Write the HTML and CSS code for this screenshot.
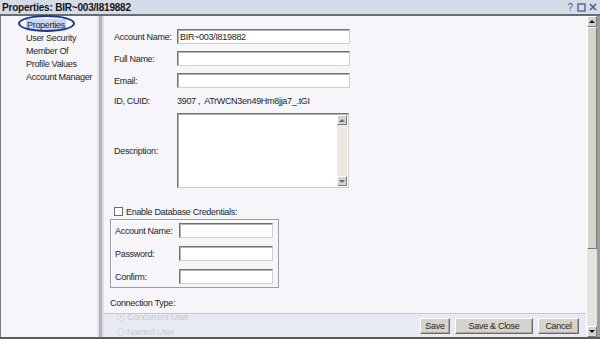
FILE: index.html
```html
<!DOCTYPE html>
<html>
<head>
<meta charset="utf-8">
<link rel="stylesheet" href="styles.css">
</head>
<body>
<div class="window">
  <div class="titlebar">
    <span class="title">Properties: BIR~003/I819882</span>
    <span class="tools">
      <span class="help">?</span>
      <svg class="ico" width="9" height="9" viewBox="0 0 9 9"><rect x="1" y="1" width="7" height="7" fill="none" stroke="#4a5c88" stroke-width="1.3"/></svg>
      <svg class="ico" width="8" height="8" viewBox="0 0 8 8"><path d="M1 1 L7 7 M7 1 L1 7" stroke="#4a5c88" stroke-width="1.5"/></svg>
    </span>
  </div>
  <div class="main">
    <nav class="sidebar">
      <div class="nav-item active"><span>Properties</span></div>
      <div class="nav-item">User Security</div>
      <div class="nav-item">Member Of</div>
      <div class="nav-item">Profile Values</div>
      <div class="nav-item">Account Manager</div>
    </nav>
    <div class="splitter"></div>
    <div class="content">
      <div class="form">
        <div class="grid">
          <label class="lbl">Account Name:</label>
          <input class="field" type="text" value="BIR~003/I819882">
          <label class="lbl">Full Name:</label>
          <input class="field" type="text" value="">
          <label class="lbl">Email:</label>
          <input class="field" type="text" value="">
          <span class="lbl">ID, CUID:</span>
          <span class="idval">3907 ,  ATrWCN3en49Hm8jja7_.tGI</span>
          <label class="lbl">Description:</label>
          <div class="textarea">
            <div class="ta-body"></div>
            <div class="ta-scroll">
              <div class="mini-btn"><span class="tri-up"></span></div>
              <div class="ta-track"></div>
              <div class="mini-btn"><span class="tri-down"></span></div>
            </div>
          </div>
        </div>
        <div class="check"><span class="cbox"></span><span>Enable Database Credentials:</span></div>
        <div class="creds">
          <label class="lbl">Account Name:</label>
          <input class="field" type="text" value="">
          <label class="lbl">Password:</label>
          <input class="field" type="text" value="">
          <label class="lbl">Confirm:</label>
          <input class="field" type="text" value="">
        </div>
        <div class="conn">Connection Type:</div>
        <div class="radio"><span class="rdot on"></span><span>Concurrent User</span></div>
        <div class="radio"><span class="rdot"></span><span>Named User</span></div>
      </div>
      <div class="buttonbar">
        <button class="btn w-save">Save</button>
        <button class="btn w-sc">Save &amp; Close</button>
        <button class="btn w-cancel">Cancel</button>
      </div>
    </div>
    <div class="scrollbar">
      <div class="sb-btn"><span class="tri-up"></span></div>
      <div class="sb-thumb"></div>
      <div class="sb-track"></div>
      <div class="sb-btn"><span class="tri-down"></span></div>
    </div>
  </div>
</div>
</body>
</html>
```
FILE: styles.css
```css
html, body {
  margin: 0;
  padding: 0;
  background: #f5f5fa;
}
body {
  font-family: "Liberation Sans", Arial, sans-serif;
  font-size: 9px;
  letter-spacing: -0.3px;
  color: #262626;
}
.window {
  width: 600px;
  height: 339px;
  box-sizing: border-box;
  display: flex;
  flex-direction: column;
  background: #f5f5fa;
  border-bottom: 2px solid #5c5c5c;
  overflow: hidden;
}
.titlebar {
  height: 14px;
  flex: none;
  background: #d5dce7;
  border-bottom: 2px solid #6c6c6c;
  display: flex;
  align-items: center;
  justify-content: space-between;
  padding: 0 3px 0 2px;
}
.title {
  font-weight: bold;
  font-size: 10px;
  letter-spacing: -0.2px;
  color: #141414;
}
.tools {
  display: flex;
  align-items: center;
  gap: 3px;
  color: #4a5c88;
}
.help {
  font-size: 10px;
  letter-spacing: 0;
  margin-right: 1px;
}
.ico { display: block; }
.main {
  flex: 1;
  min-height: 0;
  display: flex;
  border-right: 3px solid #9c9c9c;
}
.sidebar {
  width: 96px;
  flex: none;
  border-left: 1px solid #7c7c7c;
  padding-top: 3px;
  background: #f6f6fa;
}
.nav-item {
  position: relative;
  padding-left: 25px;
  line-height: 13px;
  height: 13px;
  color: #262626;
}
.nav-item.active span {
  background: #c9d7ef;
  padding: 1px 1px;
}
.nav-item.active::before {
  content: "";
  position: absolute;
  left: 17px;
  top: -4px;
  width: 57px;
  height: 17px;
  box-sizing: border-box;
  border: 2px solid #1c3690;
  border-radius: 50%;
}
.splitter {
  width: 3px;
  flex: none;
  background: #b3b3bb;
  border-left: 2px solid #e4e4ec;
  border-right: 2px solid #dedee6;
}
.content {
  flex: 1;
  min-width: 0;
  position: relative;
  overflow: hidden;
  background: #f5f5fa;
}
.form {
  padding: 13px 0 0 6px;
}
.grid {
  margin-left: 4px;
  display: grid;
  grid-template-columns: 63px 173px;
  grid-template-rows: 15px 15px 15px 11px 75px;
  row-gap: 7px;
  align-items: center;
}
.lbl {
  color: #262626;
  white-space: nowrap;
}
.field {
  display: block;
  box-sizing: border-box;
  width: 100%;
  height: 15px;
  margin: 0;
  padding: 0 2px;
  border: 1px solid;
  border-color: #727272 #cfcfcf #cfcfcf #727272;
  box-shadow: inset 1px 1px 0 #b4b4b4;
  background: #fff;
  font: inherit;
  letter-spacing: -0.3px;
  color: #222;
  outline: none;
}
.idval {
  white-space: pre;
  color: #262626;
}
.textarea {
  height: 75px;
  width: 172px;
  box-sizing: border-box;
  display: flex;
  border: 1px solid;
  border-color: #727272 #cfcfcf #cfcfcf #727272;
  box-shadow: inset 1px 1px 0 #b4b4b4;
  background: #fff;
  padding: 1px;
}
.ta-body { flex: 1; }
.ta-scroll {
  width: 10px;
  display: flex;
  flex-direction: column;
  background: #ebe9e2;
}
.ta-track { flex: 1; }
.mini-btn, .sb-btn {
  height: 10px;
  box-sizing: border-box;
  background: #d6d3cc;
  border: 1px solid;
  border-color: #ffffff #7a7a7a #7a7a7a #ffffff;
  display: flex;
  align-items: center;
  justify-content: center;
}
.tri-up {
  width: 0;
  height: 0;
  border-left: 3px solid transparent;
  border-right: 3px solid transparent;
  border-bottom: 3px solid #6a6a6a;
}
.tri-down {
  width: 0;
  height: 0;
  border-left: 3px solid transparent;
  border-right: 3px solid transparent;
  border-top: 3px solid #6a6a6a;
}
.sb-btn .tri-up { border-bottom-color: #111; }
.sb-btn .tri-down { border-top-color: #111; }
.check {
  margin: 18px 0 0 4px;
  height: 11px;
  display: flex;
  align-items: center;
  gap: 3px;
}
.cbox {
  width: 9px;
  height: 9px;
  box-sizing: border-box;
  border: 1px solid #6c6c6c;
  background: #fff;
}
.creds {
  margin-top: 2px;
  width: 169px;
  box-sizing: border-box;
  border: 1px solid #9c9c9c;
  box-shadow: inset 1px 1px 0 #ffffff;
  padding: 3px 5px 3px 4px;
  display: grid;
  grid-template-columns: 64px 94px;
  grid-auto-rows: 15px;
  row-gap: 8px;
  align-items: center;
}
.conn {
  margin-top: 9px;
  line-height: 12px;
}
.radio {
  display: flex;
  align-items: center;
  gap: 2px;
  height: 15px;
  padding-left: 7px;
}
.rdot {
  width: 8px;
  height: 8px;
  box-sizing: border-box;
  border-radius: 50%;
  border: 1px solid #777;
  background: #fff;
  position: relative;
}
.rdot.on::after {
  content: "";
  position: absolute;
  left: 2px;
  top: 2px;
  width: 2px;
  height: 2px;
  border-radius: 50%;
  background: #222;
}
.buttonbar {
  position: absolute;
  left: 0;
  right: 0;
  bottom: 0;
  height: 23px;
  border-top: 1px solid #c4c8d2;
  background: rgba(227, 231, 240, 0.84);
  display: flex;
  justify-content: flex-end;
  align-items: center;
  gap: 4px;
  padding-right: 7px;
}
.btn {
  height: 16px;
  margin: 0;
  padding: 0;
  box-sizing: border-box;
  background: #d6d3cc;
  border: 1px solid;
  border-color: #ffffff #6c6c6c #6c6c6c #ffffff;
  box-shadow: inset -1px -1px 0 #a9a7a1;
  font: inherit;
  letter-spacing: -0.3px;
  color: #262626;
  text-align: center;
}
.w-save { width: 30px; }
.w-sc { width: 78px; margin-left: 1px; }
.w-cancel { width: 41px; margin-left: 1px; }
.scrollbar {
  width: 11px;
  flex: none;
  display: flex;
  flex-direction: column;
  background: #e6e4de;
  border-left: 1px solid #fbfbfd;
  box-sizing: border-box;
}
.scrollbar .sb-btn { height: 11px; }
.sb-thumb {
  height: 222px;
  box-sizing: border-box;
  background: #d6d3cc;
  border: 1px solid;
  border-color: #ffffff #7a7a7a #7a7a7a #ffffff;
}
.sb-track { flex: 1; }
```
